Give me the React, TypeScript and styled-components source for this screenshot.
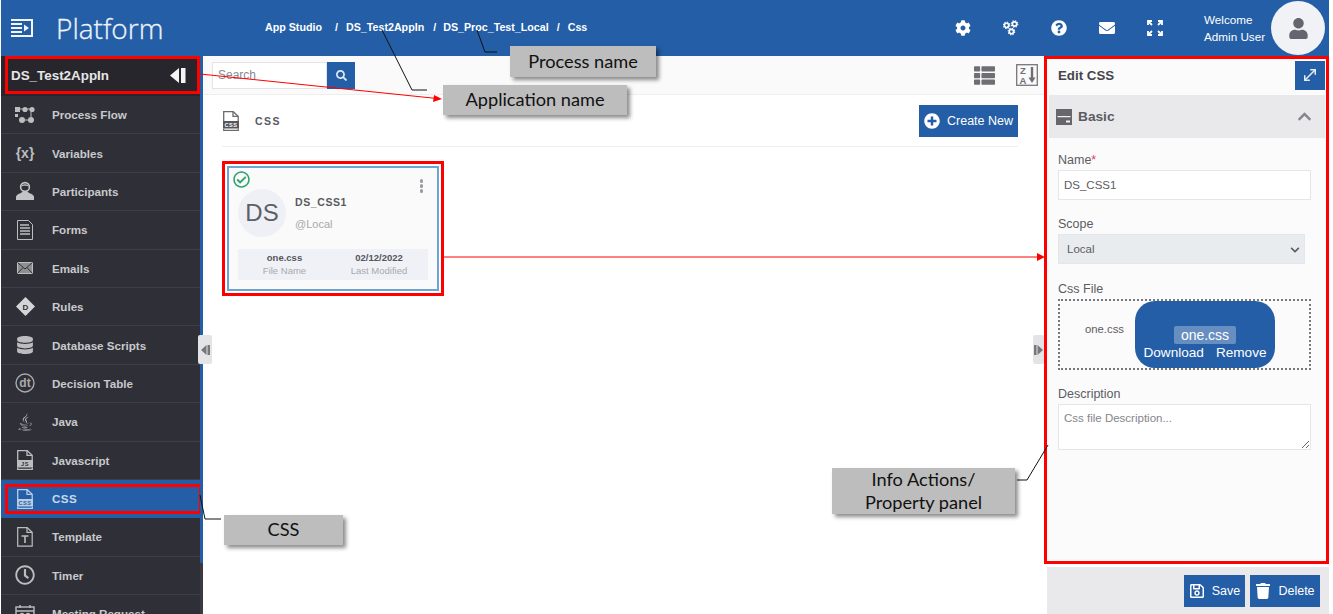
import React from "react";
import styled, { createGlobalStyle } from "styled-components";
import {
  FaCog,
  FaQuestionCircle,
  FaEnvelope,
  FaUser,
  FaDatabase,
  FaJava,
  FaRegClock,
  FaSearch,
  FaThList,
  FaPlusCircle,
  FaChevronUp,
  FaChevronDown,
  FaRegSave,
  FaTrash,
  FaRegCheckCircle,
} from "react-icons/fa";
import { MoveDiagonal } from "lucide-react";

const BLUE = "#245ea6";
const SANS = `"Liberation Sans", Arial, sans-serif`;

const GlobalStyle = createGlobalStyle`
  html, body {
    margin: 0;
    padding: 0;
    background: #fff;
    overflow: hidden;
  }
  * {
    box-sizing: border-box;
  }
`;

const Page = styled.div`
  position: relative;
  width: 1333px;
  height: 614px;
  overflow: hidden;
  padding-left: 1px;
  font-family: ${SANS};
  color: #4a4a50;
`;

const Shell = styled.div`
  width: 1328px;
  height: 614px;
  display: flex;
  flex-direction: column;
`;

/* ---- top bar ---- */
const Header = styled.header`
  height: 56px;
  flex: none;
  background: ${BLUE};
  display: flex;
  align-items: center;
  color: #fff;
`;
const Logo = styled.div`
  width: 264px;
  display: flex;
  align-items: center;
  padding-left: 10px;
  gap: 23px;
  flex: none;
`;
const Brand = styled.span`
  font-family: "Open Sans", sans-serif;
  font-weight: 300;
  font-size: 28px;
  color: #eef3f9;
  -webkit-text-stroke: 0.3px #eef3f9;
`;
const Crumbs = styled.nav`
  display: flex;
  font-size: 10.7px;
  font-weight: 700;
  flex: 1;
  margin-top: -3px;
`;
const Crumb = styled.span<{ $gap: number }>`
  margin-right: ${(p) => p.$gap}px;
  white-space: pre;
`;
const HeaderIcons = styled.div`
  display: flex;
  align-items: center;
  gap: 32px;
  font-size: 16px;
  margin-right: 41px;
`;
const IconSlot = styled.span`
  width: 16px;
  height: 16px;
  display: flex;
  align-items: center;
  justify-content: center;
`;
const Welcome = styled.div`
  font-size: 11.7px;
  line-height: 17px;
  width: 67px;
  white-space: nowrap;
  margin-top: -1px;
`;
const Avatar = styled.div`
  width: 54px;
  height: 54px;
  border-radius: 50%;
  background: #f1f2f6;
  color: #63666f;
  display: flex;
  align-items: center;
  justify-content: center;
  font-size: 21px;
  margin-right: 4px;
`;

const Body = styled.div`
  flex: 1;
  display: flex;
  min-height: 0;
`;

/* ---- left menu ---- */
const Sidebar = styled.aside`
  width: 202px;
  flex: none;
  background: #2f3037;
  overflow: hidden;
  border-right: 3px solid;
  border-image: linear-gradient(${BLUE} 0 506px, #3a3a40 506px) 1;
`;
const AppTitle = styled.div`
  height: 40px;
  background: #27262c;
  position: relative;
  display: flex;
  align-items: center;
  justify-content: space-between;
  padding: 0 13px 2px 10px;
  color: #e6e6e6;
  font-size: 13.4px;
  font-weight: 700;
  &::after {
    content: "";
    position: absolute;
    left: 4px;
    right: 0;
    top: 0;
    bottom: 2px;
    border: 3px solid #f00;
  }
`;
const MenuRow = styled.div<{ $active?: boolean }>`
  position: relative;
  height: 38.4px;
  display: flex;
  align-items: center;
  gap: 16px;
  padding-left: 13px;
  font-size: 11.6px;
  font-weight: 700;
  letter-spacing: ${(p) => (p.$active ? "0.5px" : "0")};
  color: ${(p) => (p.$active ? "#c9d8ea" : "#c8c9cc")};
  background: ${(p) => (p.$active ? BLUE : "transparent")};
  border-bottom: 1px solid ${(p) => (p.$active ? BLUE : "#3d3e46")};
  margin-right: ${(p) => (p.$active ? "-3px" : "0")};
  &::after {
    content: "";
    display: ${(p) => (p.$active ? "block" : "none")};
    position: absolute;
    left: 4px;
    right: 1px;
    top: 4px;
    bottom: 3px;
    border: 3px solid #f00;
  }
`;
const MenuIcon = styled.span`
  width: 22px;
  height: 24px;
  flex: none;
  display: flex;
  align-items: center;
  justify-content: center;
  font-size: 18px;
  color: #bdbdbf;
`;
const BraceIcon = styled.span`
  font-size: 14px;
  font-weight: 700;
`;

/* ---- centre ---- */
const Main = styled.main`
  flex: 1;
  min-width: 0;
  position: relative;
  display: flex;
  flex-direction: column;
  background: #fff;
`;
const Toolbar = styled.div`
  height: 39px;
  flex: none;
  background: #fafafa;
  border-bottom: 1px solid #eeeeef;
  display: flex;
  align-items: center;
  padding: 0 6px 0 9px;
`;
const SearchInput = styled.input`
  width: 115px;
  height: 27px;
  border: 1px solid #e4e4e6;
  background: #fff;
  padding: 0 5px;
  font-size: 12px;
  font-family: ${SANS};
  outline: none;
  &::placeholder {
    color: #8a8a8f;
  }
`;
const SearchButton = styled.button`
  width: 28px;
  height: 27px;
  background: ${BLUE};
  border: 0;
  color: #dfe8f3;
  font-size: 11px;
  padding: 0;
  display: flex;
  align-items: center;
  justify-content: center;
`;
const ToolIcons = styled.div`
  margin-left: auto;
  display: flex;
  align-items: center;
  gap: 21px;
  color: #6f6f73;
  font-size: 21px;
`;
const Content = styled.div`
  flex: 1;
  padding: 10px 26px 0 19px;
`;
const TitleRow = styled.div`
  height: 42px;
  border-bottom: 1px solid #eeeeef;
  display: flex;
  justify-content: space-between;
  padding-bottom: 10px;
`;
const TitleLeft = styled.div`
  display: flex;
  align-items: center;
  gap: 16px;
  padding-left: 1px;
  font-size: 10.5px;
  font-weight: 700;
  letter-spacing: 1.4px;
  color: #5a5a60;
`;
const PrimaryButton = styled.button<{ $w: number }>`
  width: ${(p) => p.$w}px;
  height: 32px;
  background: ${BLUE};
  border: 0;
  color: #fff;
  font-family: ${SANS};
  font-size: 12.5px;
  padding: 0;
  display: flex;
  align-items: center;
  justify-content: center;
  gap: 7px;
  svg {
    font-size: 16px;
  }
`;
const CardFrame = styled.div`
  width: 222px;
  height: 135px;
  margin-top: 14px;
  border: 3px solid #f00;
  padding: 2px;
`;
const Card = styled.div`
  position: relative;
  height: 100%;
  border: 2px solid #6ba5d4;
  background: #fafafa;
  padding: 21px 9px 0;
  display: flex;
  flex-direction: column;
`;
const CheckMark = styled.span`
  position: absolute;
  left: 4px;
  top: 3px;
  color: #2fa36b;
  font-size: 17px;
  line-height: 17px;
`;
const Kebab = styled.span`
  position: absolute;
  right: 14px;
  top: 11px;
  display: flex;
  flex-direction: column;
  gap: 1.5px;
  i {
    width: 3.5px;
    height: 3.5px;
    border-radius: 50%;
    background: #9a9ba2;
  }
`;
const CardTop = styled.div`
  display: flex;
  gap: 9px;
`;
const Initials = styled.div`
  width: 48px;
  height: 48px;
  border-radius: 50%;
  background: #eff0f6;
  display: flex;
  align-items: center;
  justify-content: center;
  font-size: 24px;
  color: #5c5e68;
`;
const CardName = styled.div`
  font-size: 10.5px;
  font-weight: 700;
  letter-spacing: 0.6px;
  color: #5a5a60;
  margin-top: 7px;
`;
const CardScope = styled.div`
  font-size: 11px;
  color: #a9a9ad;
  margin-top: 10px;
`;
const CardStats = styled.div`
  margin-top: 12px;
  height: 31px;
  background: #f0f1f6;
  display: grid;
  grid-template-columns: 93px 96px;
  text-align: center;
  align-items: center;
  font-size: 9.5px;
`;
const StatValue = styled.div`
  font-weight: 700;
  color: #55555b;
  line-height: 13px;
`;
const StatLabel = styled.div`
  color: #a9a9ad;
  line-height: 14px;
`;
const Handle = styled.div<{ $side: "left" | "right" }>`
  position: absolute;
  top: 279px;
  ${(p) => (p.$side === "left" ? "left: -5px;" : "right: 0;")}
  width: ${(p) => (p.$side === "left" ? 14 : 11)}px;
  height: 29px;
  background: #e4e4e6;
  border-radius: 2px;
  display: flex;
  align-items: center;
  justify-content: center;
  svg {
    transform: ${(p) => (p.$side === "left" ? "none" : "scaleX(-1)")};
  }
`;

/* ---- right panel ---- */
const Panel = styled.section`
  width: 285px;
  flex: none;
  display: flex;
  flex-direction: column;
`;
const PanelFrame = styled.div`
  height: 508px;
  border: 3px solid #f00;
  background: #fbfbfb;
`;
const PanelHead = styled.div`
  height: 36px;
  display: flex;
  align-items: center;
  justify-content: space-between;
  padding: 0 1px 4px 11px;
  font-size: 13.3px;
  font-weight: 700;
  color: #45454b;
`;
const ExpandButton = styled.span`
  width: 30px;
  height: 29px;
  background: ${BLUE};
  color: #e4ecf5;
  display: flex;
  align-items: center;
  justify-content: center;
`;
const SectionBar = styled.div`
  height: 43px;
  width: 276px;
  margin-left: 2px;
  background: #e9e9eb;
  display: flex;
  align-items: center;
  padding: 0 13px 0 7px;
  gap: 6px;
  font-size: 13.7px;
  font-weight: 700;
  color: #5b5b60;
`;
const ChevronUp = styled.span`
  margin-left: auto;
  font-size: 15px;
  color: #85858a;
  display: flex;
`;
const Form = styled.div`
  padding: 15px 14px 0 11px;
  display: flex;
  flex-direction: column;
`;
const Label = styled.label`
  font-size: 12.5px;
  line-height: 15px;
  color: #5c5c62;
  margin-bottom: 2px;
`;
const Star = styled.span`
  color: #e6356e;
`;
const TextInput = styled.input`
  width: 253px;
  height: 30px;
  border: 1px solid #e6e6e8;
  background: #fff;
  padding: 0 5px;
  font-family: ${SANS};
  font-size: 11.5px;
  color: #5c5c62;
  margin-bottom: 17px;
  outline: none;
`;
const SelectWrap = styled.div`
  position: relative;
  width: 247px;
  margin-bottom: 18px;
  svg {
    position: absolute;
    right: 5px;
    top: 11px;
    font-size: 10px;
    color: #5c5c62;
  }
`;
const SelectBox = styled.select`
  width: 100%;
  height: 30px;
  appearance: none;
  border: 1px solid #e4e6e9;
  background: #e9ecef;
  font-family: ${SANS};
  font-size: 11.5px;
  color: #5c5c62;
  padding: 0 8px;
  outline: none;
`;
const DropZone = styled.div`
  width: 253px;
  height: 71px;
  border: 2px dotted #77777c;
  display: flex;
  align-items: center;
  padding: 0 34px 0 25px;
  justify-content: space-between;
  margin-bottom: 17px;
`;
const FileName = styled.span`
  font-size: 11.3px;
  color: #5c5c62;
  margin-bottom: 11px;
`;
const FileChip = styled.div`
  width: 140px;
  height: 67px;
  border-radius: 20px;
  background: ${BLUE};
  color: #fff;
  display: flex;
  flex-direction: column;
  align-items: center;
  justify-content: flex-end;
  padding-bottom: 7px;
  font-size: 13.6px;
`;
const ChipName = styled.span`
  background: rgba(255, 255, 255, 0.3);
  border-radius: 2px;
  padding: 0 7px;
  line-height: 18px;
  font-size: 14px;
`;
const ChipActions = styled.div`
  display: flex;
  gap: 12px;
  line-height: 17px;
`;
const TextArea = styled.textarea`
  width: 253px;
  height: 46px;
  border: 1px solid #e6e6e8;
  background: #fff;
  padding: 7px 5px;
  font-family: ${SANS};
  font-size: 11.5px;
  outline: none;
  &::placeholder {
    color: #85858c;
  }
`;
const PanelFooter = styled.div`
  flex: 1;
  margin: 3px 0 0 3px;
  background: #e9e9eb;
  display: flex;
  justify-content: flex-end;
  gap: 5px;
  padding: 8px 9px 0 0;
`;

/* ---- call-outs drawn over the page ---- */
const Callout = styled.div<{ $x: number; $y: number; $w: number; $h: number }>`
  position: absolute;
  left: ${(p) => p.$x}px;
  top: ${(p) => p.$y}px;
  width: ${(p) => p.$w}px;
  height: ${(p) => p.$h}px;
  background: #bdbdbd;
  box-shadow: 3px 3px 4px rgba(0, 0, 0, 0.45);
  color: #111;
  font-family: Lato, sans-serif;
  font-size: 18.2px;
  line-height: 23px;
  display: flex;
  align-items: center;
  justify-content: center;
  text-align: center;
  padding-bottom: 1px;
`;
const Lines = styled.svg`
  position: absolute;
  left: 0;
  top: 0;
  pointer-events: none;
`;

const LogoMark = () => (
  <svg width="22" height="18" viewBox="0 0 22 18" fill="#f2f5fa">
    <rect x="0" y="0" width="22" height="2" />
    <rect x="0" y="4" width="11" height="2" />
    <rect x="0" y="8" width="11" height="2" />
    <rect x="0" y="12" width="11" height="2" />
    <rect x="0" y="16" width="22" height="2" />
    <rect x="20" y="0" width="2" height="18" />
    <path d="M13 5.5 L18 9 L13 12.5 Z" />
  </svg>
);

const GearsIcon = () => (
  <svg width="18" height="18" viewBox="0 0 18 18" fill="none" stroke="#fff">
    <circle cx="4" cy="6" r="2.4" strokeWidth="1.8" />
    <circle cx="4" cy="6" r="3.7" strokeWidth="1.2" strokeDasharray="1.5 1.4" />
    <circle cx="13" cy="4.5" r="2.4" strokeWidth="1.8" />
    <circle cx="13" cy="4.5" r="3.7" strokeWidth="1.2" strokeDasharray="1.5 1.4" />
    <circle cx="9.5" cy="13" r="2.4" strokeWidth="1.8" />
    <circle cx="9.5" cy="13" r="3.7" strokeWidth="1.2" strokeDasharray="1.5 1.4" />
  </svg>
);

const ProcessIcon = () => (
  <svg width="20" height="18" viewBox="0 0 20 18" fill="#bdbdbf">
    <rect x="0" y="1" width="5" height="5" />
    <rect x="0" y="8" width="3" height="3" />
    <circle cx="10" cy="3.5" r="2.6" />
    <circle cx="17" cy="3.5" r="2.6" />
    <circle cx="7" cy="14" r="3" />
    <circle cx="16" cy="14" r="3" />
    <path d="M5 3h3M12 3h3M10 14h4M16 6v5" stroke="#bdbdbf" strokeWidth="1" />
  </svg>
);

const PersonIcon = () => (
  <svg width="18" height="20" viewBox="0 0 18 20">
    <path d="M0 19v-3c0-2 2-3 5-4l1-1h6l1 1c3 1 5 2 5 4v3z" fill="#c4c4c6" />
    <circle cx="9" cy="6" r="4.4" fill="#2f3037" stroke="#c4c4c6" strokeWidth="1.6" />
    <path d="M5 5.5c1.5-3 6.5-3 8 0-2-1-6-1-8 0z" fill="#c4c4c6" />
  </svg>
);

const FormIcon = () => (
  <svg width="16" height="20" viewBox="0 0 16 20" fill="none" stroke="#bdbdbf">
    <path d="M.5.5h11l4 4v15H.5z" />
    <path d="M3 5h9M3 8h10M3 11h10M3 14h10" strokeWidth="1.5" />
  </svg>
);

const MailIcon = () => (
  <svg width="16" height="12" viewBox="0 0 16 12" fill="none" stroke="#bdbdbf">
    <rect x=".5" y=".5" width="15" height="11" fill="#8f8f92" />
    <path d="M.5.5 8 7 15.5.5M.5 11.5 6 5.5M15.5 11.5 10 5.5" stroke="#2f3037" />
  </svg>
);

const RuleIcon = () => (
  <svg width="19" height="19" viewBox="0 0 19 19">
    <path d="M9.5 0 19 9.5 9.5 19 0 9.5z" fill="#d5d5d7" />
    <text x="9.5" y="12.5" fontSize="8" fontWeight="700" textAnchor="middle" fill="#2f3037" fontFamily="Liberation Sans">
      D
    </text>
  </svg>
);

const DtIcon = () => (
  <svg width="20" height="20" viewBox="0 0 20 20">
    <circle cx="10" cy="10" r="9" fill="none" stroke="#a9a9ac" strokeWidth="1.4" />
    <text x="10" y="14" fontSize="12" textAnchor="middle" fill="#a9a9ac" fontFamily="Liberation Sans">
      dt
    </text>
  </svg>
);

const TypeFile = ({ label, color = "#bdbdbf", strip = "#bdbdbf", ink = "#2f3037" }: { label: string; color?: string; strip?: string; ink?: string }) => (
  <svg width="16" height="20" viewBox="0 0 16 20" fill="none">
    <path d="M.7 13V.7h9.5l5 4.5V13" stroke={color} strokeWidth="1.3" />
    <path d="M10 .7v4.6h5" stroke={color} strokeWidth="1.3" />
    <rect x="0" y="10" width="16" height="7.5" fill={strip} />
    <path d="M.7 17.5v1.8h14.6v-1.8" stroke={color} strokeWidth="1.3" />
    <text x="8" y="16" fontSize="5.6" fontWeight="700" letterSpacing=".5" textAnchor="middle" fill={ink} fontFamily="Liberation Sans">
      {label}
    </text>
  </svg>
);

const TemplateIcon = () => (
  <svg width="16" height="20" viewBox="0 0 16 20" fill="none" stroke="#bdbdbf" strokeWidth="1.2">
    <path d="M.7.7h9.5l5 4.5v14H.7z" />
    <path d="M10 .7v4.6h5" />
    <path d="M4.5 9h7M8 9v7" strokeWidth="1.6" />
  </svg>
);

const MeetingIcon = () => (
  <svg width="20" height="18" viewBox="0 0 20 18" fill="none" stroke="#bdbdbf" strokeWidth="1.4">
    <rect x="1" y="2" width="18" height="15" />
    <path d="M1 6h18M5 0v3M15 0v3" />
    <circle cx="7" cy="10" r="1.5" fill="#bdbdbf" />
    <circle cx="13" cy="10" r="1.5" fill="#bdbdbf" />
  </svg>
);

const ExpandCorners = () => (
  <svg width="16" height="16" viewBox="0 0 16 16" fill="none" stroke="#fff" strokeWidth="1.8">
    <path d="M1 5V1h4M11 1h4v4M15 11v4h-4M5 15H1v-4" />
    <path d="M2 2l3 3M14 2l-3 3M14 14l-3-3M2 14l3-3" />
  </svg>
);

const SortIcon = () => (
  <svg width="22" height="22" viewBox="0 0 22 22" fill="none">
    <rect x=".7" y=".7" width="20.6" height="20.6" stroke="#77777b" strokeWidth="1.3" />
    <text x="7" y="10" fontSize="9.5" fontWeight="700" textAnchor="middle" fill="#6f6f73" fontFamily="Liberation Sans">
      Z
    </text>
    <text x="7" y="19.5" fontSize="9.5" fontWeight="700" textAnchor="middle" fill="#6f6f73" fontFamily="Liberation Sans">
      A
    </text>
    <path d="M16 3v13" stroke="#6f6f73" strokeWidth="2.4" />
    <path d="M12.5 13.5 16 19l3.5-5.5z" fill="#6f6f73" />
  </svg>
);

const BasicIcon = () => (
  <svg width="16" height="16" viewBox="0 0 16 16">
    <path d="M0 0h16v16H0z" fill="#66666b" />
    <path d="M1.5 7h13v1.2h-13zM10 11.5h4v2h-4z" fill="#f0f0f2" />
  </svg>
);

const HandleMark = () => (
  <svg width="9" height="10" viewBox="0 0 9 10" fill="#77777b">
    <path d="M5.5 0v10L0 5z" />
    <rect x="6.5" y="0" width="2.5" height="10" />
  </svg>
);

const menu: { label: string; icon: React.ReactNode; active?: boolean }[] = [
  { label: "Process Flow", icon: <ProcessIcon /> },
  { label: "Variables", icon: <BraceIcon>{"{x}"}</BraceIcon> },
  { label: "Participants", icon: <PersonIcon /> },
  { label: "Forms", icon: <FormIcon /> },
  { label: "Emails", icon: <MailIcon /> },
  { label: "Rules", icon: <RuleIcon /> },
  { label: "Database Scripts", icon: <FaDatabase /> },
  { label: "Decision Table", icon: <DtIcon /> },
  { label: "Java", icon: <FaJava /> },
  { label: "Javascript", icon: <TypeFile label="JS" /> },
  { label: "CSS", active: true, icon: <TypeFile label="CSS" color="#b9cce3" strip="#b9cce3" ink={BLUE} /> },
  { label: "Template", icon: <TemplateIcon /> },
  { label: "Timer", icon: <FaRegClock size={20} /> },
  { label: "Meeting Request", icon: <MeetingIcon /> },
];

export default function App() {
  return (
    <Page>
      <GlobalStyle />
      <Shell>
        <Header>
          <Logo>
            <LogoMark />
            <Brand>Platform</Brand>
          </Logo>
          <Crumbs>
            <Crumb $gap={13}>App Studio</Crumb>
            <Crumb $gap={8}>/</Crumb>
            <Crumb $gap={9}>DS_Test2AppIn</Crumb>
            <Crumb $gap={7}>/</Crumb>
            <Crumb $gap={8}>DS_Proc_Test_Local</Crumb>
            <Crumb $gap={8}>/</Crumb>
            <Crumb $gap={0}>Css</Crumb>
          </Crumbs>
          <HeaderIcons>
            <IconSlot><FaCog /></IconSlot>
            <IconSlot><GearsIcon /></IconSlot>
            <IconSlot><FaQuestionCircle /></IconSlot>
            <IconSlot><FaEnvelope /></IconSlot>
            <IconSlot><ExpandCorners /></IconSlot>
          </HeaderIcons>
          <Welcome>
            Welcome
            <br />
            Admin User
          </Welcome>
          <Avatar><FaUser /></Avatar>
        </Header>
        <Body>
          <Sidebar>
            <AppTitle>
              DS_Test2AppIn
              <svg width="17" height="15" viewBox="0 0 17 15" fill="#f4f4f4">
                <path d="M9 0v15L0 7.5z" />
                <rect x="11" y="0" width="4.5" height="15" />
              </svg>
            </AppTitle>
            {menu.map((m) => (
              <MenuRow key={m.label} $active={m.active}>
                <MenuIcon>{m.icon}</MenuIcon>
                {m.label}
              </MenuRow>
            ))}
          </Sidebar>
          <Main>
            <Toolbar>
              <SearchInput placeholder="Search" />
              <SearchButton><FaSearch /></SearchButton>
              <ToolIcons>
                <FaThList />
                <SortIcon />
              </ToolIcons>
            </Toolbar>
            <Content>
              <TitleRow>
                <TitleLeft>
                  <TypeFile label="CSS" color="#6a6a70" strip="#55555b" ink="#fff" />
                  CSS
                </TitleLeft>
                <PrimaryButton $w={99}>
                  <FaPlusCircle />
                  Create New
                </PrimaryButton>
              </TitleRow>
              <CardFrame>
                <Card>
                  <CheckMark><FaRegCheckCircle /></CheckMark>
                  <Kebab><i /><i /><i /></Kebab>
                  <CardTop>
                    <Initials>DS</Initials>
                    <div>
                      <CardName>DS_CSS1</CardName>
                      <CardScope>@Local</CardScope>
                    </div>
                  </CardTop>
                  <CardStats>
                    <div>
                      <StatValue>one.css</StatValue>
                      <StatLabel>File Name</StatLabel>
                    </div>
                    <div>
                      <StatValue>02/12/2022</StatValue>
                      <StatLabel>Last Modified</StatLabel>
                    </div>
                  </CardStats>
                </Card>
              </CardFrame>
            </Content>
            <Handle $side="left"><HandleMark /></Handle>
            <Handle $side="right"><HandleMark /></Handle>
          </Main>
          <Panel>
            <PanelFrame>
              <PanelHead>
                Edit CSS
                <ExpandButton><MoveDiagonal size={18} strokeWidth={2} /></ExpandButton>
              </PanelHead>
              <SectionBar>
                <BasicIcon />
                Basic
                <ChevronUp><FaChevronUp /></ChevronUp>
              </SectionBar>
              <Form>
                <Label>Name<Star>*</Star></Label>
                <TextInput defaultValue="DS_CSS1" />
                <Label>Scope</Label>
                <SelectWrap>
                  <SelectBox defaultValue="Local">
                    <option>Local</option>
                  </SelectBox>
                  <FaChevronDown />
                </SelectWrap>
                <Label>Css File</Label>
                <DropZone>
                  <FileName>one.css</FileName>
                  <FileChip>
                    <ChipName>one.css</ChipName>
                    <ChipActions>
                      <span>Download</span>
                      <span>Remove</span>
                    </ChipActions>
                  </FileChip>
                </DropZone>
                <Label>Description</Label>
                <TextArea placeholder="Css file Description..." />
              </Form>
            </PanelFrame>
            <PanelFooter>
              <PrimaryButton $w={61}><FaRegSave />Save</PrimaryButton>
              <PrimaryButton $w={70}><FaTrash />Delete</PrimaryButton>
            </PanelFooter>
          </Panel>
        </Body>
      </Shell>

      <Lines width="1333" height="614" viewBox="0 0 1333 614" fill="none">
        <path d="M382 30 412 90H427M477 30 485 52H497M200 495 205 519H221M1048 445 1027 480H1017" stroke="#111" strokeWidth="1" />
        <path d="M200 74 436 98.4M443 257H1038" stroke="#f00" strokeWidth="1" />
        <path d="M442 99 434 95 433 102zM1045 257 1037 253V261z" fill="#f00" />
      </Lines>
      <Callout $x={510} $y={46} $w={146} $h={31}>Process name</Callout>
      <Callout $x={443} $y={85} $w={184} $h={30}>Application name</Callout>
      <Callout $x={224} $y={515} $w={119} $h={30}>CSS</Callout>
      <Callout $x={832} $y={468} $w={183} $h={46}>
        Info Actions/
        <br />
        Property panel
      </Callout>
    </Page>
  );
}
